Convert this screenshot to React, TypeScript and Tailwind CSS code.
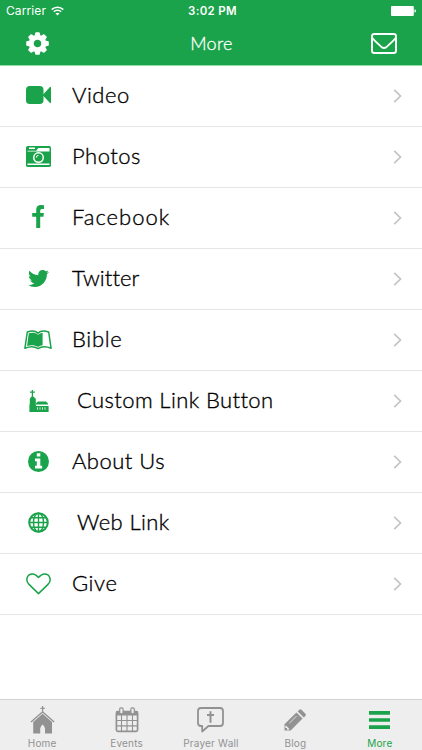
import type { ReactNode } from "react";
import clsx from "clsx";
import { FaTwitter } from "react-icons/fa";

interface MenuItem {
  label: string;
  icon: ReactNode;
  labelClass: string;
}

interface Tab {
  label: string;
  icon: ReactNode;
  active?: boolean;
}

const menuItems: MenuItem[] = [
  { label: "Video", icon: <VideoIcon />, labelClass: "ml-[10px] tracking-[0.5px]" },
  { label: "Photos", icon: <CameraIcon />, labelClass: "ml-[10px] tracking-[0.5px]" },
  { label: "Facebook", icon: <FacebookIcon />, labelClass: "ml-[10px] tracking-[1px]" },
  { label: "Twitter", icon: <FaTwitter className="h-[21px] w-[21px]" />, labelClass: "ml-[10px] tracking-[0.1px]" },
  { label: "Bible", icon: <BibleIcon />, labelClass: "ml-[10px] tracking-[0.7px]" },
  { label: "Custom Link Button", icon: <ParishIcon />, labelClass: "ml-[15px] tracking-[0.4px]" },
  { label: "About Us", icon: <InfoIcon />, labelClass: "ml-[10px] tracking-[0.5px]" },
  { label: "Web Link", icon: <GlobeIcon />, labelClass: "ml-[15px] tracking-[0.4px]" },
  { label: "Give", icon: <HeartIcon />, labelClass: "ml-[10px] tracking-[0.6px]" },
];

const tabs: Tab[] = [
  { label: "Home", icon: <ChurchIcon /> },
  { label: "Events", icon: <CalendarIcon /> },
  { label: "Prayer Wall", icon: <PrayerIcon /> },
  { label: "Blog", icon: <PencilIcon /> },
  { label: "More", icon: <BarsIcon />, active: true },
];

export default function App() {
  return (
    <div className="flex h-[750px] w-[422px] flex-col overflow-hidden bg-white font-['Inter',sans-serif]">
      <header className="h-[66px] shrink-0 border-b border-[#8edba6] bg-[#1aa34a] text-white">
        <StatusBar />
        <NavBar />
      </header>

      <main className="flex-1">
        {menuItems.map((item) => (
          <MenuRow key={item.label} item={item} />
        ))}
      </main>

      <nav className="grid h-[51px] shrink-0 grid-cols-5 border-t border-[#d3d3d3] bg-[#eeeeee]">
        {tabs.map((tab) => (
          <TabButton key={tab.label} tab={tab} />
        ))}
      </nav>
    </div>
  );
}

function StatusBar() {
  return (
    <div className="grid h-[22px] grid-cols-3 items-center pl-[6px] pr-[6px] text-[12px] leading-[22px]">
      <div className="flex items-center gap-[5px]">
        <span className="tracking-[0.1px]">Carrier</span>
        <WifiIcon />
      </div>
      <span className="pl-[3px] text-center text-[11.5px] font-semibold tracking-[0.3px]">3:02 PM</span>
      <div className="flex justify-end">
        <BatteryIcon />
      </div>
    </div>
  );
}

function NavBar() {
  return (
    <div className="grid h-[43px] grid-cols-3 items-center pl-[26px] pr-[25px]">
      <button aria-label="Settings" className="justify-self-start pb-[1px]">
        <GearIcon />
      </button>
      <h1 className="text-center font-['Lato',sans-serif] text-[18px] font-light tracking-[0.3px] [-webkit-text-stroke:0.3px_currentColor]">More</h1>
      <button aria-label="Messages" className="justify-self-end">
        <EnvelopeIcon />
      </button>
    </div>
  );
}

function MenuRow({ item }: { item: MenuItem }) {
  return (
    <a href="#" className="flex h-[61px] items-center border-b border-[#e6e6e6] pb-[1px] pl-[14px] pr-[20px]">
      <span className="flex w-12 justify-center text-[#1aa34a]">{item.icon}</span>
      <span
        className={clsx(
          "flex-1 whitespace-nowrap pb-[2px] font-['Lato',sans-serif] text-[22px] font-light leading-[30px] text-black [font-variant-ligatures:none] [-webkit-text-stroke:0.35px_black]",
          item.labelClass
        )}
      >
        {item.label}
      </span>
      <ChevronIcon />
    </a>
  );
}

function TabButton({ tab }: { tab: Tab }) {
  return (
    <button className={clsx("flex flex-col items-center", tab.active ? "text-[#1aa34a]" : "text-[#929292]")}>
      <span className="flex h-[36px] items-center pt-[3px]">{tab.icon}</span>
      <span className="whitespace-nowrap text-[10px] leading-[14px] tracking-[0.2px]">{tab.label}</span>
    </button>
  );
}

function GearIcon() {
  return (
    <svg viewBox="-11.5 -11.5 23 23" className="h-[23px] w-[23px]">
      <g fill="currentColor">
        {[0, 45, 90, 135, 180, 225, 270, 315].map((angle) => (
          <path key={angle} d="M-3.2-7-2.2-10.8q.1-.5.7-.5h3q.6 0 .7.5L3.2-7z" transform={`rotate(${angle})`} />
        ))}
      </g>
      <circle r="6.2" fill="none" stroke="currentColor" strokeWidth="4.8" />
    </svg>
  );
}

function WifiIcon() {
  return (
    <svg viewBox="0 0 13 10" className="h-[10px] w-[13px]" fill="none" stroke="currentColor" strokeWidth="1.5">
      <path d="M.7 3.6a8.2 8.2 0 0 1 11.6 0M2.8 5.8a5.2 5.2 0 0 1 7.4 0" />
      <path d="M6.5 9.6 4.5 7.6a2.9 2.9 0 0 1 4 0z" fill="currentColor" stroke="none" />
    </svg>
  );
}

function BatteryIcon() {
  return (
    <svg viewBox="0 0 25 10" className="h-[10px] w-[25px]" fill="currentColor">
      <rect width="22.8" height="10" rx="1" />
      <path d="M23.5 3.3q1.5.3 1.5 1.7t-1.5 1.7z" />
    </svg>
  );
}

function EnvelopeIcon() {
  return (
    <svg viewBox="0 0 26 21" className="h-[21px] w-[26px]" fill="none" stroke="currentColor" strokeWidth="1.9">
      <rect x="1" y="1" width="24" height="19" rx="2.3" />
      <path d="M1.3 5c2.8 3.4 5.5 5.6 9.2 8.9q2.5 2 5 0c3.7-3.3 6.4-5.5 9.2-8.9" strokeLinejoin="round" />
    </svg>
  );
}

function ChevronIcon() {
  return (
    <svg viewBox="0 0 9 14" className="h-[14px] w-[9px] text-[#c4c4c7]" fill="none" stroke="currentColor" strokeWidth="1.7">
      <path d="M1.2.8 7.5 7l-6.3 6.2" />
    </svg>
  );
}

function VideoIcon() {
  return (
    <svg viewBox="0 0 25 18" className="mb-[1px] h-[18px] w-[25px]" fill="currentColor">
      <rect width="17.5" height="18" rx="3.8" />
      <path d="M17 8.6 23.8 1.2q1.2-.9 1.2.4v14.8q0 1.3-1.2.4L17 9.4z" />
    </svg>
  );
}

function CameraIcon() {
  return (
    <svg viewBox="0 0 25 21" className="h-[21px] w-[25px]">
      <rect width="25" height="21" rx="1.8" fill="currentColor" />
      <path d="M3 1.5h6v1.4H3zM1.5 4.7h8.8L12.3 2h11.2v3.6H1.5zM1.5 17.5h22v1.4h-22z" fill="#fff" />
      <circle cx="12.5" cy="11.6" r="5.5" fill="#fff" />
      <circle cx="12.5" cy="11.6" r="4" fill="currentColor" />
      <path d="M10.3 11.6a2.2 2.2 0 0 1 2.2-2.2" fill="none" stroke="#fff" strokeWidth="1" />
    </svg>
  );
}

function FacebookIcon() {
  return (
    <svg viewBox="0 0 12 23" className="mb-[2px] h-[23px] w-[12px]" fill="currentColor">
      <path d="M12 .2v3.700H9.900Q8.200 3.900 8.200 5.400v2.500h3.700l-.5 3.800H8.200V23H4.200V11.700H.2V7.900h4V4.900Q4.200 0 9 0q2 0 3 .2z" />
    </svg>
  );
}

function BibleIcon() {
  return (
    <svg viewBox="0 0 28 20" className="h-[20px] w-[28px]" fill="none" stroke="currentColor">
      <path
        d="M14 3.100C11.500.600 7 .600 3.300 2L.9 18.300c4.600-1.900 9.600-2 13.100.300 3.500-2.300 8.500-2.200 13.100-.300L24.700 2C21 .600 16.500.600 14 3.100z"
        strokeWidth="1.500"
        strokeLinejoin="round"
      />
      <path d="M14 4.700C11.500 2.400 8 2.300 4.800 3.300L3.100 15.900c4-1.200 8-1 10.900 1 1.400-.9 3-1.400 4.600-1.600V2.700q-2.700.3-4.600 2z" fill="currentColor" stroke="none" />
    </svg>
  );
}

function ParishIcon() {
  return (
    <svg viewBox="0 0 20 22" className="ml-[2px] mt-[1px] h-[22px] w-[20px]" fill="currentColor">
      <path d="M2.8 0h1.200v1.600h1.900v1.200H4v3.400l2.800 2.600v6.200h.3l-.1-2 2-1.500h8l2 2v1.500H7V16h12.600v6H.4v-7.500H.8V8.800l2-2.600V2.800H.9V1.600h1.900z" />
      <path d="M7 14.900h12.600M8.500 17.300v2.400M11 17.300v2.400M13.500 17.300v2.400M16 17.300v2.400" fill="none" stroke="#fff" strokeWidth=".8" />
    </svg>
  );
}

function InfoIcon() {
  return (
    <svg viewBox="0 0 21 21" className="h-[21px] w-[21px]">
      <circle cx="10.5" cy="10.5" r="10.5" fill="currentColor" />
      <path d="M8.8 2.3h3.5v3.1H8.8zM7 7.500h5.300v7.300h1.800v2.700H7v-2.700h1.800v-4.600H7z" fill="#fff" />
    </svg>
  );
}

function GlobeIcon() {
  return (
    <svg viewBox="0 0 21 21" className="ml-[1px] h-[21px] w-[21px]" fill="none" stroke="currentColor" strokeWidth="1.4">
      <circle cx="10.5" cy="10.5" r="9.3" strokeWidth="2" />
      <ellipse cx="10.5" cy="10.5" rx="5" ry="9.3" />
      <path d="M10.5 1v19M1 10.5h19M2.8 5.7h15.4M2.8 15.3h15.4" />
    </svg>
  );
}

function HeartIcon() {
  return (
    <svg viewBox="0 0 25 22" className="h-[22px] w-[25px]" fill="none" stroke="currentColor" strokeWidth="1.5">
      <path d="M12.5 20.6 3 11.4C-.9 7.5.8.9 6.5.9c2.7 0 4.300 1.600 6 3.500 1.700-1.900 3.300-3.500 6-3.500 5.700 0 7.400 6.600 3.500 10.500z" strokeLinejoin="round" />
    </svg>
  );
}

function ChurchIcon() {
  return (
    <svg viewBox="0 0 25 28" className="h-[28px] w-[25px]" fill="currentColor">
      <path d="M12 0h1.200v1.800h1.600V3h-1.600v2.500L24.600 15.600l-.9 1L12.600 6.800 1.400 16.600l-.9-1L12 5.500V3h-1.600V1.800H12z" />
      <path d="M12.600 7.700 22 16V27.500h-7v-5q-.5-2.500-2.400-4-1.900 1.500-2.400 4v5H3.200V16z" />
    </svg>
  );
}

function CalendarIcon() {
  return (
    <svg viewBox="0 0 24 26" className="h-[26px] w-[24px]" fill="none" stroke="currentColor">
      <rect x="1.4" y="4.7" width="21.2" height="19.6" rx="1.5" strokeWidth="1.7" />
      <path d="M1 4h22v4.500H1z" fill="currentColor" stroke="none" />
      <path d="M6.5 8v16M12 8v16M17.5 8v16M1 13.500h22M1 18.900h22" strokeWidth="1.1" />
      <rect x="4.7" y=".8" width="3.4" height="6" rx="1.3" fill="#eee" strokeWidth="1.2" />
      <rect x="15.9" y=".8" width="3.4" height="6" rx="1.3" fill="#eee" strokeWidth="1.2" />
    </svg>
  );
}

function PrayerIcon() {
  return (
    <svg viewBox="0 0 27 26" className="h-[26px] w-[27px]" fill="none" stroke="currentColor" strokeWidth="1.8">
      <path d="M4 1h19q3 0 3 3v12q0 3-3 3H11.500l-6.300 5.500V19H4q-3 0-3-3V4q0-3 3-3z" strokeLinejoin="round" />
      <path d="M13.5 4.3v11.500M10 8h7" strokeWidth="2" />
    </svg>
  );
}

function PencilIcon() {
  return (
    <svg viewBox="0 0 22 22" className="h-[22px] w-[22px]" fill="currentColor">
      <path d="M.5 21.500v-6.300L12.400 3.600l6.200 6L6.700 21.500z" />
      <path d="m13.700 2.400 1.600-1.600q1.100-1 2.200 0l3.900 3.900q1 1.100 0 2.200l-1.600 1.500z" />
      <path d="m2 16.600 3.400 3.400-.8.700H3v-1.800H1.300v-1.700z" fill="#eee" />
      <path d="M5.300 14.300 12.600 7" stroke="#eee" strokeWidth=".8" fill="none" />
    </svg>
  );
}

function BarsIcon() {
  return (
    <svg viewBox="0 0 21 18" className="h-[18px] w-[21px]" fill="currentColor">
      <path d="M0 0h21v3.700H0zM0 7.150h21v3.700H0zM0 14.300h21V18H0z" />
    </svg>
  );
}
